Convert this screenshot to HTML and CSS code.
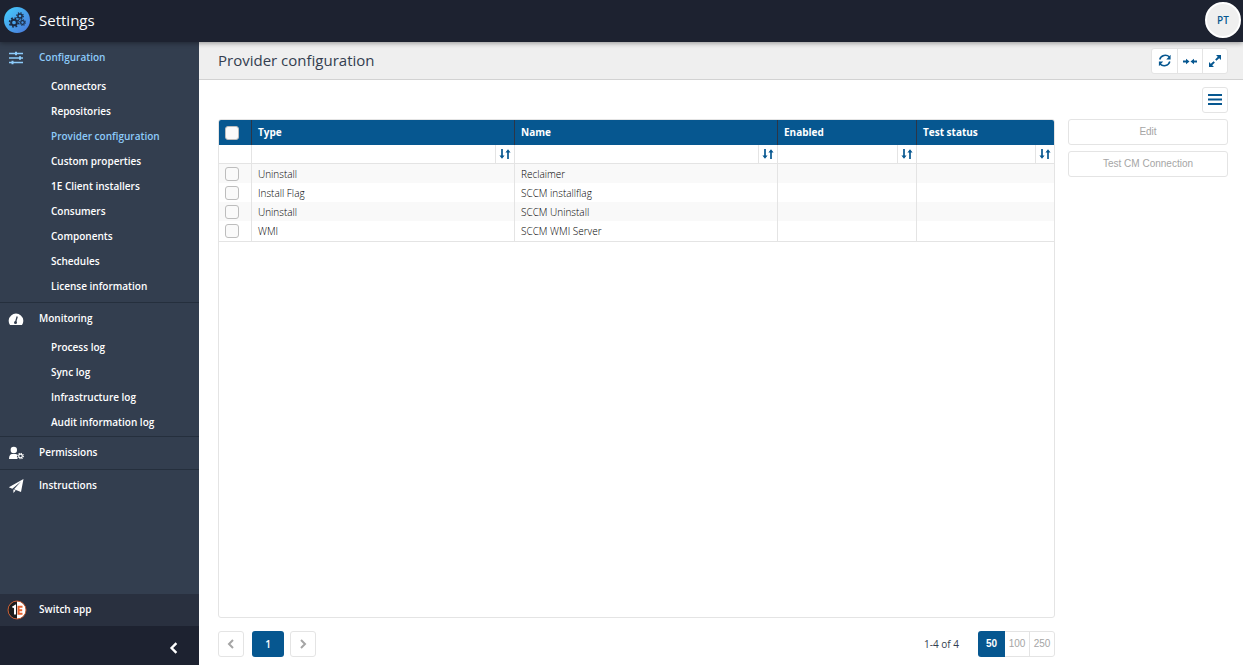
FILE: index.html
```html
<!DOCTYPE html>
<html lang="en">
<head>
<meta charset="utf-8">
<title>Settings</title>
<link rel="stylesheet" href="styles.css">
</head>
<body>
<svg class="defs" aria-hidden="true">
  <symbol id="sort" viewBox="0 0 12 10"><path d="M3 0v8M9 10V2" stroke="currentColor" stroke-width="1.7" fill="none"/><path d="M.4 6.4h5.2L3 9.8zM6.400 3.600h5.200L9 .2z" fill="currentColor"/></symbol>
  <symbol id="gear" viewBox="-10 -10 20 20"><circle r="5.200" fill="none" stroke="currentColor" stroke-width="3.600"/><circle r="8.200" fill="none" stroke="currentColor" stroke-width="3" stroke-dasharray="3.220 3.220"/></symbol>
  <symbol id="left" viewBox="0 0 10 10"><path d="M7 1 3 5l4 4" fill="none" stroke="currentColor" stroke-width="2"/></symbol>
</svg>
<header class="topbar">
  <svg class="logo" viewBox="0 0 26 26" aria-hidden="true">
    <defs><linearGradient id="sky" x1="0" y1="0" x2="1" y2="1"><stop offset="0" stop-color="#45d0ff"/><stop offset="1" stop-color="#4a74d8"/></linearGradient></defs>
    <circle cx="13" cy="13" r="13" fill="url(#sky)"/>
    <g color="#1b2a44"><use href="#gear" x="4.500" y="10" width="11" height="11"/><use href="#gear" x="12" y="5" width="8" height="8"/><use href="#gear" x="15" y="12" width="7" height="7"/></g>
  </svg>
  <h1 class="app-name">Settings</h1>
  <button class="avatar" type="button">PT</button>
</header>
<div class="shell">
  <aside class="sidebar">
    <nav class="menu">
      <section class="group">
        <a class="head active" href="#"><svg class="head-icon" viewBox="0 0 16 14" aria-hidden="true"><path d="M1 2.500h14M1 7h14M1 11.500h14" stroke="currentColor" stroke-width="1.500"/><path d="M8 .7v3.600M12 5.200v3.600M4.500 9.700v3.600" stroke="currentColor" stroke-width="2"/></svg><span class="head-text">Configuration</span></a>
        <a class="item" href="#">Connectors</a>
        <a class="item" href="#">Repositories</a>
        <a class="item active" href="#">Provider configuration</a>
        <a class="item" href="#">Custom properties</a>
        <a class="item" href="#">1E Client installers</a>
        <a class="item" href="#">Consumers</a>
        <a class="item" href="#">Components</a>
        <a class="item" href="#">Schedules</a>
        <a class="item" href="#">License information</a>
      </section>
      <section class="group">
        <a class="head" href="#"><svg class="head-icon" viewBox="0 0 16 14" aria-hidden="true"><path d="M2 13A7.300 7.300 0 1 1 14 13z" fill="currentColor"/><path d="M7.500 10.500 9.200 4.500" stroke="#333e4f" stroke-width="1.300"/><circle cx="7.500" cy="10.500" r="1.500" fill="#333e4f"/></svg><span class="head-text">Monitoring</span></a>
        <a class="item" href="#">Process log</a>
        <a class="item" href="#">Sync log</a>
        <a class="item" href="#">Infrastructure log</a>
        <a class="item" href="#">Audit information log</a>
      </section>
      <section class="group">
        <a class="head" href="#"><svg class="head-icon" viewBox="0 0 16 14" aria-hidden="true"><circle cx="5.800" cy="4" r="3.200" fill="currentColor"/><path d="M1 13c0-3.500 1.500-5 3-5h3.500c1.200 0 1.600.7 1.800 1.500C8.500 11 9 12 9.800 13z" fill="currentColor"/><use href="#gear" x="9" y="6.500" width="7" height="7"/></svg><span class="head-text">Permissions</span></a>
      </section>
      <section class="group">
        <a class="head" href="#"><svg class="head-icon" viewBox="0 0 16 14" aria-hidden="true"><path d="M15.500 0 .8 8.200l3.500 1.500L13 2.500 6 10.300l7 2.700zM5.400 10.500V14l2.300-2.500z" fill="currentColor"/></svg><span class="head-text">Instructions</span></a>
      </section>
    </nav>
    <button class="switch" type="button">
      <svg class="switch-icon" viewBox="0 0 20 20" aria-hidden="true"><circle cx="10" cy="10" r="9" fill="#fff"/><path d="M10 1a9 9 0 0 0 0 18z" fill="#1e1e1e"/><circle cx="10" cy="10" r="9" fill="none" stroke="#c65a30"/><path d="M5.500 7.500 8 6v8.500" stroke="#fff" stroke-width="2" fill="none"/><path d="M15.500 6.700h-4v7h4M11.500 10.200h3.700" stroke="#e8622c" stroke-width="2" fill="none"/></svg>
      <span class="head-text">Switch app</span></button>
    <div class="collapse-bar"><button class="collapse" type="button" aria-label="Collapse menu"><svg class="collapse-icon" viewBox="0 0 10 10"><use href="#left"/></svg></button></div>
  </aside>
  <main class="main">
    <div class="titlebar">
      <h2 class="title">Provider configuration</h2>
      <div class="joined">
        <button class="tool" type="button" aria-label="Refresh"><svg class="tool-icon" viewBox="0 0 14 14"><path d="M1.700 5.500C3 1 8.500.2 11.500 3M11.800 7.500c-1.300 4.500-6.800 5.300-9.800 2.500" fill="none" stroke="currentColor" stroke-width="1.500"/><path d="M12.600.8v4.700H8.300zM.9 12.200V7.500h4.300z" fill="currentColor"/></svg></button>
        <button class="tool" type="button" aria-label="Fit columns"><svg class="tool-icon" viewBox="0 0 14 14"><path d="M0 7.500h4M10 7.500h4" stroke="currentColor" stroke-width="1.800"/><path d="M3 4.700v5.600l3.500-2.800zM11 4.700v5.600L7.500 7.500z" fill="currentColor"/></svg></button>
        <button class="tool" type="button" aria-label="Full screen"><svg class="tool-icon" viewBox="0 0 14 14"><path d="m3 11 3.200-3.200M11 3 7.800 6.200" stroke="currentColor" stroke-width="1.900"/><path d="M8 1h5v5zM1 8v5h5z" fill="currentColor"/></svg></button>
      </div>
    </div>
    <div class="content">
      <div class="options"><button class="square" type="button" aria-label="Options"><svg class="tool-icon" viewBox="0 0 14 14"><path d="M0 2h14M0 6.500h14M0 11h14" stroke="currentColor" stroke-width="2"/></svg></button></div>
      <div class="workspace">
        <div class="grid">
          <table class="table">
            <colgroup><col class="col-check"><col class="col-wide"><col class="col-wide"><col class="col-mid"><col></colgroup>
            <thead>
              <tr class="names"><th><input class="check" type="checkbox" aria-label="Select all"></th><th>Type</th><th>Name</th><th>Enabled</th><th>Test status</th></tr>
              <tr class="filters">
                <td></td>
                <td><div class="filter"><input class="filter-text" type="text" aria-label="Filter type"><button class="sort" type="button" aria-label="Sort by type"><svg class="sort-icon"><use href="#sort"/></svg></button></div></td>
                <td><div class="filter"><input class="filter-text" type="text" aria-label="Filter name"><button class="sort" type="button" aria-label="Sort by name"><svg class="sort-icon"><use href="#sort"/></svg></button></div></td>
                <td><div class="filter"><input class="filter-text" type="text" aria-label="Filter enabled"><button class="sort" type="button" aria-label="Sort by enabled"><svg class="sort-icon"><use href="#sort"/></svg></button></div></td>
                <td><div class="filter"><input class="filter-text" type="text" aria-label="Filter test status"><button class="sort" type="button" aria-label="Sort by test status"><svg class="sort-icon"><use href="#sort"/></svg></button></div></td>
              </tr>
            </thead>
            <tbody>
              <tr><td><input class="check" type="checkbox" aria-label="Select Reclaimer"></td><td>Uninstall</td><td>Reclaimer</td><td></td><td></td></tr>
              <tr><td><input class="check" type="checkbox" aria-label="Select SCCM installflag"></td><td>Install Flag</td><td>SCCM installflag</td><td></td><td></td></tr>
              <tr><td><input class="check" type="checkbox" aria-label="Select SCCM Uninstall"></td><td>Uninstall</td><td>SCCM Uninstall</td><td></td><td></td></tr>
              <tr><td><input class="check" type="checkbox" aria-label="Select SCCM WMI Server"></td><td>WMI</td><td>SCCM WMI Server</td><td></td><td></td></tr>
            </tbody>
          </table>
        </div>
        <div class="actions">
          <button class="action" type="button">Edit</button>
          <button class="action" type="button">Test CM Connection</button>
        </div>
        <footer class="pager">
          <button class="square muted" type="button" aria-label="Previous page"><svg class="page-icon" viewBox="0 0 10 10"><use href="#left"/></svg></button>
          <button class="page" type="button">1</button>
          <button class="square muted" type="button" aria-label="Next page"><svg class="page-icon flip" viewBox="0 0 10 10"><use href="#left"/></svg></button>
          <span class="range">1-4 of 4</span>
          <div class="sizes">
            <button class="size current" type="button">50</button>
            <button class="size" type="button">100</button>
            <button class="size" type="button">250</button>
          </div>
        </footer>
      </div>
    </div>
  </main>
</div>
</body>
</html>
```
FILE: styles.css
```css
* { box-sizing: border-box; }

body {
  margin: 0;
  height: 100vh;
  display: flex;
  flex-direction: column;
  font: 10px/14px "Open Sans", sans-serif;
  color: #333e4f;
  background: #fff;
}

button { margin: 0; padding: 0; border: 0; background: none; font: inherit; color: inherit; }
a { color: inherit; text-decoration: none; }
h1, h2 { margin: 0; font-weight: 400; }
svg { display: block; flex: none; }
.defs { position: absolute; width: 0; height: 0; }

/* Top bar */
.topbar {
  display: flex;
  align-items: center;
  flex: none;
  height: 42px;
  padding: 0 2px 3px 4px;
  background: #1d2230;
  color: #fff;
  box-shadow: 0 1px 5px rgba(0, 0, 0, .4);
  z-index: 1;
}
.logo { width: 26px; height: 26px; }
.app-name { margin-left: 9px; font-size: 15px; line-height: 20px; }
.avatar {
  width: 36px;
  height: 36px;
  margin-left: auto;
  border: 2px solid #fff;
  border-radius: 50%;
  background: #efefef;
  color: #065790;
  font-weight: 600;
}

.shell { display: flex; flex: 1; min-height: 0; }

/* Sidebar */
.sidebar {
  display: flex;
  flex-direction: column;
  flex: none;
  width: 199px;
  background: #333e4f;
  color: #fff;
  font-weight: 600;
}
.menu { flex: 1; }
.group + .group { border-top: 1px solid #252f3d; }
.group:first-child { padding-bottom: 3px; }
.group:nth-child(2) { padding-bottom: 1px; }
.head { display: flex; align-items: center; gap: 15px; height: 32px; padding-left: 8px; }
.head-icon { width: 16px; height: 14px; }
.head-text { padding-bottom: 2px; }
.item { display: block; height: 25px; padding-left: 51px; line-height: 25px; }
.active { color: #8dcbfa; }
.switch { display: flex; align-items: center; gap: 12px; height: 32px; padding-left: 7px; background: #29303f; }
.switch-icon { width: 20px; height: 20px; }
.collapse-bar { display: flex; justify-content: flex-end; align-items: center; height: 39px; padding: 5px 19px 0; background: #1d2230; }
.collapse-icon { width: 12px; height: 12px; }

/* Main area */
.main { display: flex; flex-direction: column; flex: 1; min-width: 0; }
.titlebar {
  display: flex;
  align-items: center;
  justify-content: space-between;
  height: 38px;
  padding: 0 15px 0 19px;
  background: #efefef;
  border-bottom: 1px solid #d2d2d2;
}
.title { padding-bottom: 2px; font-size: 15px; font-weight: 500; line-height: 20px; }
.joined { display: flex; border: 1px solid #e4e4e4; border-radius: 3px; background: #fff; overflow: hidden; }
.tool { display: grid; place-items: center; width: 25px; height: 24px; color: #065790; }
.tool + .tool { border-left: 1px solid #e4e4e4; }
.tool-icon { width: 14px; height: 14px; }

.content { display: flex; flex-direction: column; flex: 1; gap: 6px; min-height: 0; padding: 7px 15px 8px 19px; }
.options { display: flex; justify-content: flex-end; }
.square {
  display: grid;
  place-items: center;
  width: 26px;
  height: 26px;
  border: 1px solid #e4e4e4;
  border-radius: 3px;
  background: #fff;
  color: #065790;
}
.workspace { display: grid; flex: 1; grid-template: 1fr auto / 1fr 160px; gap: 13px; min-height: 0; }
.grid { border: 1px solid #e4e4e4; border-radius: 3px; overflow: auto; }

/* Table */
.table { width: 100%; table-layout: fixed; border-collapse: separate; border-spacing: 0; border-bottom: 1px solid #e4e4e4; }
.col-check { width: 33px; }
.col-wide { width: 263px; }
.col-mid { width: 139px; }
.table th, .table td { height: 19px; padding: 0 6px; text-align: left; border-right: 1px solid #e4e4e4; }
.table th:last-child, .table td:last-child { border-right: 0; }
.table .names th { height: 25px; background: #065790; color: #fff; font-weight: 700; border-right-color: #2c3647; }
.table .names th:not(:first-child) { padding-bottom: 2px; }
.table .filters td { height: 19px; padding: 0; border-bottom: 1px solid #e4e4e4; }
tbody { color: #000; font-weight: 300; }
tbody tr:nth-child(odd) { background: #f9f9f9; }
.table tbody tr:last-child td { height: 20px; }
.check {
  appearance: none;
  display: block;
  width: 14px;
  height: 14px;
  margin: 0;
  border: 1px solid #bdbdbd;
  border-radius: 3px;
  background: #fafafa;
}
.filter { display: flex; height: 18px; }
.filter-text { flex: 1; min-width: 0; border: 0; padding: 0 6px; font: inherit; outline: 0; }
.sort { display: grid; place-items: center; width: 19px; border-left: 1px solid #e4e4e4; color: #065790; }
.sort-icon { width: 12px; height: 10px; }

/* Actions */
.actions { display: flex; flex-direction: column; gap: 6px; }
.action {
  height: 26px;
  border: 1px solid #e4e4e4;
  border-radius: 3px;
  color: #a5a5a5;
  font-family: "Liberation Sans", Arial, sans-serif;
}

/* Pager */
.pager { display: flex; align-items: center; }
.muted { color: #a5a5a5; }
.page-icon { width: 10px; height: 10px; }
.flip { transform: scaleX(-1); }
.page { width: 32px; height: 26px; margin: 0 6px 0 8px; border-radius: 3px; background: #065790; color: #fff; font-weight: 600; }
.range { margin: 0 19px 0 auto; }
.sizes { display: flex; border-radius: 3px; overflow: hidden; }
.size {
  width: 25px;
  height: 26px;
  border: 1px solid #e4e4e4;
  border-left: 0;
  color: #a5a5a5;
  font-family: "Liberation Sans", Arial, sans-serif;
}
.size:last-child { border-radius: 0 3px 3px 0; }
.size.current { width: 27px; border: 0; background: #065790; color: #fff; font-weight: 700; }
```
